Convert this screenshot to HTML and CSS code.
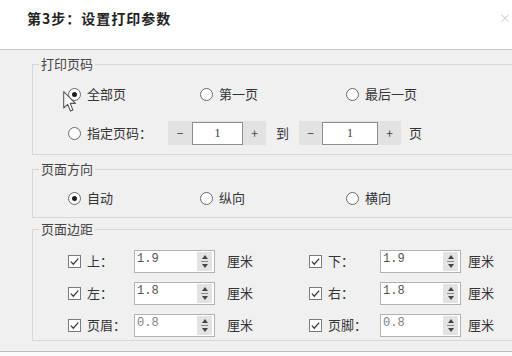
FILE: index.html
```html
<!DOCTYPE html>
<html lang="zh-CN">
<head>
<meta charset="utf-8">
<title>设置打印参数</title>
<link rel="stylesheet" href="styles.css">
</head>
<body>
<div class="header">
  <div class="title">第3步：设置打印参数</div>
  <div class="close">×</div>
</div>
<div class="main">
  <fieldset class="group g1">
    <legend>打印页码</legend>
    <div class="row">
      <div class="opt w1"><span class="radio on"></span><span>全部页</span></div>
      <div class="opt w2"><span class="radio"></span><span>第一页</span></div>
      <div class="opt"><span class="radio"></span><span>最后一页</span></div>
    </div>
    <div class="row row2">
      <div class="opt wlab"><span class="radio"></span><span>指定页码：</span></div>
      <div class="spin">
        <span class="sbtn">−</span>
        <span class="sinput">1</span>
        <span class="sbtn plus">+</span>
      </div>
      <span class="to">到</span>
      <div class="spin">
        <span class="sbtn m2">−</span>
        <span class="sinput wide">1</span>
        <span class="sbtn plus">+</span>
      </div>
      <span class="page">页</span>
    </div>
  </fieldset>

  <fieldset class="group g2">
    <legend>页面方向</legend>
    <div class="row">
      <div class="opt w1"><span class="radio on"></span><span>自动</span></div>
      <div class="opt w2"><span class="radio"></span><span>纵向</span></div>
      <div class="opt"><span class="radio"></span><span>横向</span></div>
    </div>
  </fieldset>

  <fieldset class="group g3">
    <legend>页面边距</legend>
    <div class="mrow">
      <div class="mcell">
        <div class="chk"><svg class="cb" viewBox="0 0 13 13"><rect x="0.5" y="0.5" width="12" height="12" fill="#fff" stroke="#7a7a7a"/><path d="M2.8 6.6 L5.3 9.2 L10.2 3.6" fill="none" stroke="#3c3c3c" stroke-width="1.3"/></svg><span>上：</span></div>
        <div class="num"><span class="val">1.9</span><span class="nspin"><i class="up"></i><b></b><i class="dn"></i></span></div>
        <span class="unit">厘米</span>
      </div>
      <div class="mcell r">
        <div class="chk"><svg class="cb" viewBox="0 0 13 13"><rect x="0.5" y="0.5" width="12" height="12" fill="#fff" stroke="#7a7a7a"/><path d="M2.8 6.6 L5.3 9.2 L10.2 3.6" fill="none" stroke="#3c3c3c" stroke-width="1.3"/></svg><span>下：</span></div>
        <div class="num"><span class="val">1.9</span><span class="nspin"><i class="up"></i><b></b><i class="dn"></i></span></div>
        <span class="unit">厘米</span>
      </div>
    </div>
    <div class="mrow">
      <div class="mcell">
        <div class="chk"><svg class="cb" viewBox="0 0 13 13"><rect x="0.5" y="0.5" width="12" height="12" fill="#fff" stroke="#7a7a7a"/><path d="M2.8 6.6 L5.3 9.2 L10.2 3.6" fill="none" stroke="#3c3c3c" stroke-width="1.3"/></svg><span>左：</span></div>
        <div class="num"><span class="val">1.8</span><span class="nspin"><i class="up"></i><b></b><i class="dn"></i></span></div>
        <span class="unit">厘米</span>
      </div>
      <div class="mcell r">
        <div class="chk"><svg class="cb" viewBox="0 0 13 13"><rect x="0.5" y="0.5" width="12" height="12" fill="#fff" stroke="#7a7a7a"/><path d="M2.8 6.6 L5.3 9.2 L10.2 3.6" fill="none" stroke="#3c3c3c" stroke-width="1.3"/></svg><span>右：</span></div>
        <div class="num"><span class="val">1.8</span><span class="nspin"><i class="up"></i><b></b><i class="dn"></i></span></div>
        <span class="unit">厘米</span>
      </div>
    </div>
    <div class="mrow">
      <div class="mcell">
        <div class="chk"><svg class="cb" viewBox="0 0 13 13"><rect x="0.5" y="0.5" width="12" height="12" fill="#fff" stroke="#7a7a7a"/><path d="M2.8 6.6 L5.3 9.2 L10.2 3.6" fill="none" stroke="#3c3c3c" stroke-width="1.3"/></svg><span>页眉：</span></div>
        <div class="num"><span class="val light">0.8</span><span class="nspin"><i class="up"></i><b></b><i class="dn"></i></span></div>
        <span class="unit">厘米</span>
      </div>
      <div class="mcell r">
        <div class="chk"><svg class="cb" viewBox="0 0 13 13"><rect x="0.5" y="0.5" width="12" height="12" fill="#fff" stroke="#7a7a7a"/><path d="M2.8 6.6 L5.3 9.2 L10.2 3.6" fill="none" stroke="#3c3c3c" stroke-width="1.3"/></svg><span>页脚：</span></div>
        <div class="num"><span class="val light">0.8</span><span class="nspin"><i class="up"></i><b></b><i class="dn"></i></span></div>
        <span class="unit">厘米</span>
      </div>
    </div>
  </fieldset>
</div>
<div class="footer"></div>

<svg class="cursor" width="14" height="22" viewBox="0 0 14 22"><path d="M0.7 0.7 L0.7 17 L4.6 13.3 L7.4 20 L9.9 19 L7.2 12.4 L12.4 12.4 Z" fill="#fff" stroke="#555" stroke-width="1.1" stroke-linejoin="round"/></svg>
</body>
</html>
```
FILE: styles.css
```css
* { box-sizing: border-box; }

html, body {
  margin: 0;
  padding: 0;
}

body {
  width: 512px;
  height: 356px;
  overflow: hidden;
  background: #f0f0f1;
  font-family: "Noto Sans CJK SC", "Microsoft YaHei", sans-serif;
  font-size: 13px;
  color: #333;
}

.header {
  height: 50px;
  background: #fff;
  border-bottom: 1px solid #c4c4c4;
  display: flex;
  justify-content: space-between;
  align-items: flex-start;
  padding: 8px 0 0 27px;
}

.title {
  font-size: 14px;
  font-weight: bold;
  letter-spacing: 1px;
  line-height: 20px;
  color: #222;
}

.close {
  font-size: 12px;
  line-height: 20px;
  color: #cfcfcf;
  margin-right: 1px;
}

.main {
  padding: 6px 0 0 32px;
  display: flex;
  flex-direction: column;
}

.group {
  margin: 0;
  min-width: 0;
  border: 1px solid #d7d7d9;
  border-right: none;
  padding: 0 0 0 6px;
}

.group legend {
  padding: 0 2px;
  line-height: 16px;
  font-size: 13px;
  color: #444;
}

.g1 { padding-top: 10px; padding-bottom: 9px; }
.g2 { margin-top: 6px; padding-top: 9px; padding-bottom: 7px; }
.g3 { margin-top: 3px; padding-top: 12px; padding-bottom: 3px; }

.row {
  display: flex;
  align-items: center;
  height: 24px;
  margin-left: 29px;
  line-height: 16px;
}

.row2 { margin-top: 15px; }

.opt {
  display: flex;
  align-items: center;
}

.w1 { width: 132px; }
.w2 { width: 146px; }
.wlab { width: 100px; }

.radio {
  width: 13px;
  height: 13px;
  border: 1px solid #6a6a6a;
  border-radius: 50%;
  background: #fff;
  margin-right: 6px;
  display: flex;
  align-items: center;
  justify-content: center;
}

.radio.on::after {
  content: "";
  width: 5px;
  height: 5px;
  border-radius: 50%;
  background: #1e1e1e;
}

.spin {
  display: flex;
  height: 24px;
  background: #e2e2e3;
  align-items: center;
}

.sbtn {
  width: 24px;
  text-align: center;
  font-size: 12px;
  line-height: 22px;
  color: #444;
}

.sbtn.m2 { width: 23px; }
.sbtn.plus { width: 23px; }

.sinput {
  width: 51px;
  height: 23px;
  border: 1px solid #8e8e8e;
  background: #fff;
  text-align: center;
  font-family: "Liberation Serif", serif;
  font-size: 12px;
  line-height: 20px;
  color: #333;
}

.sinput.wide { width: 56px; }

.to { margin: 0 10px; }
.page { margin-left: 8px; }

.mrow {
  display: flex;
  align-items: center;
  height: 24px;
  margin-left: 29px;
  line-height: 16px;
}

.mrow + .mrow { margin-top: 8px; }

.mcell {
  display: flex;
  align-items: center;
  width: 241px;
  flex: none;
}

.mcell.r { width: auto; }

.chk {
  display: flex;
  align-items: center;
  width: 66px;
}

.mcell.r .chk { width: 71px; }

.cb {
  width: 13px;
  height: 13px;
  margin-right: 6px;
  flex: none;
}

.num {
  width: 81px;
  height: 23px;
  border: 1px solid #b2b2b2;
  background: #fff;
  display: flex;
}

.val {
  flex: 1;
  padding-left: 2px;
  font-family: "Liberation Mono", monospace;
  font-size: 12px;
  line-height: 16px;
  color: #555;
}

.val.light { color: #808080; }

.nspin {
  width: 15px;
  margin: 1px 2px 1px 0;
  background: #e3e3e4;
  display: flex;
  flex-direction: column;
  align-items: center;
  justify-content: center;
}

.nspin i {
  width: 0;
  height: 0;
  border-left: 3px solid transparent;
  border-right: 3px solid transparent;
}

.nspin i.up { border-bottom: 4px solid #444; }
.nspin i.dn { border-top: 4px solid #444; }

.nspin b {
  width: 7px;
  height: 1px;
  margin: 2px 0;
  background: #8a8a8a;
}

.unit { margin-left: 12px; }
.mcell.r .unit { margin-left: 7px; }

.footer {
  margin-top: 10px;
  border-top: 1px solid #bcbcbc;
  background: #fbfbfb;
  height: 20px;
}

.cursor {
  position: absolute;
  left: 63px;
  top: 91px;
}
```
